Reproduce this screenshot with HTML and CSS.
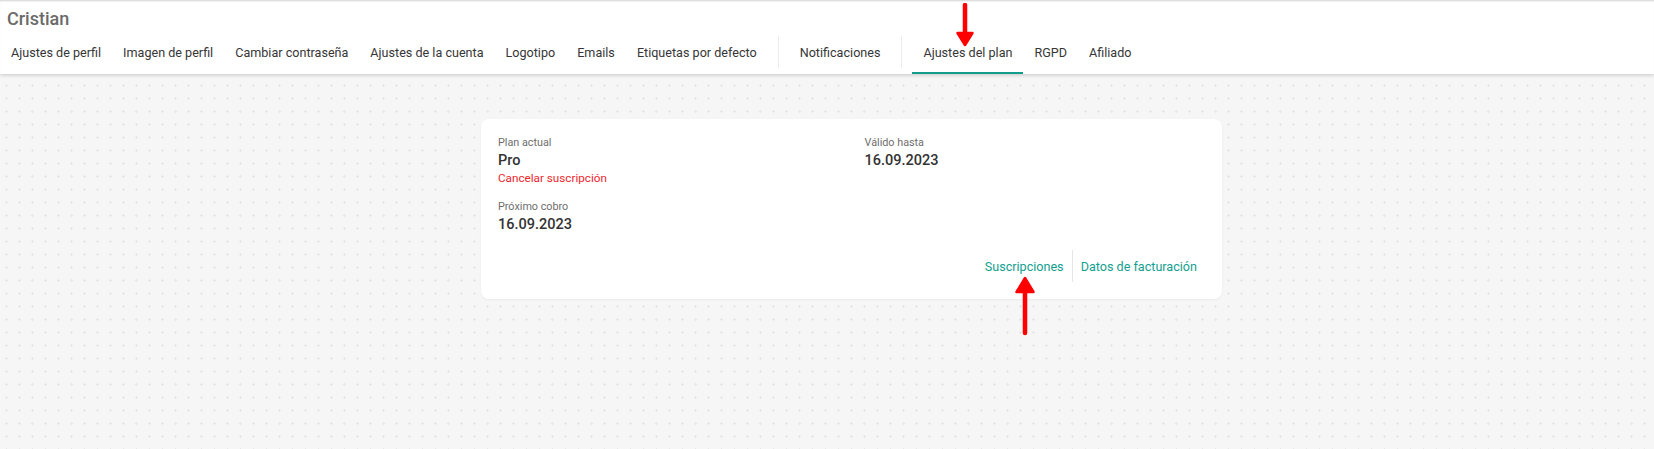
FILE: index.html
```html
<!DOCTYPE html>
<html lang="es">
<head>
<meta charset="utf-8">
<title>Ajustes del plan</title>
<link rel="stylesheet" href="styles.css">
</head>
<body>
<header class="topbar">
  <div class="user-name">Cristian</div>
  <nav class="tabs">
    <a class="tab">Ajustes de perfil</a>
    <a class="tab">Imagen de perfil</a>
    <a class="tab">Cambiar contraseña</a>
    <a class="tab">Ajustes de la cuenta</a>
    <a class="tab">Logotipo</a>
    <a class="tab">Emails</a>
    <a class="tab">Etiquetas por defecto</a>
    <span class="tab-sep"></span>
    <a class="tab">Notificaciones</a>
    <span class="tab-sep"></span>
    <a class="tab active">Ajustes del plan</a>
    <a class="tab">RGPD</a>
    <a class="tab">Afiliado</a>
  </nav>
</header>
<main class="content">
  <section class="plan-card">
    <div class="plan-grid">
      <div class="plan-col">
        <div class="label">Plan actual</div>
        <div class="value">Pro</div>
        <a class="cancel">Cancelar suscripción</a>
        <div class="label label-gap">Próximo cobro</div>
        <div class="value">16.09.2023</div>
      </div>
      <div class="plan-col">
        <div class="label">Válido hasta</div>
        <div class="value">16.09.2023</div>
      </div>
    </div>
    <div class="plan-links">
      <a class="plan-link">Suscripciones</a>
      <span class="link-sep"></span>
      <a class="plan-link">Datos de facturación</a>
    </div>
  </section>
</main>
<svg class="arrow arrow-down" width="20" height="44" viewBox="0 0 20 44"><path d="M10 2 V32" stroke="#f00" stroke-width="4.5" stroke-linecap="round"/><path d="M2.5 30 L10 42 L17.5 30 Z" fill="#f00" stroke="#f00" stroke-width="2.5" stroke-linejoin="round"/></svg>
<svg class="arrow arrow-up" width="22" height="60" viewBox="0 0 22 60"><path d="M11 16 V57" stroke="#f00" stroke-width="4.5" stroke-linecap="round"/><path d="M2.5 16 L11 2 L19.5 16 Z" fill="#f00" stroke="#f00" stroke-width="2.5" stroke-linejoin="round"/></svg>
</body>
</html>
```
FILE: styles.css
```css
html, body {
  margin: 0;
  padding: 0;
}
body {
  width: 1654px;
  height: 449px;
  overflow: hidden;
  position: relative;
  font-family: Roboto, "Liberation Sans", Arial, sans-serif;
  background-color: #f6f6f6;
  background-image: radial-gradient(circle, #e7e7e7 1px, rgba(231,231,231,0) 1.4px);
  background-size: 13px 13px;
  background-position: 0 1px;
}
a { text-decoration: none; cursor: pointer; }

.topbar {
  background: #fff;
  height: 74px;
  box-sizing: border-box;
  padding-top: 8px;
  box-shadow: inset 0 2px 2px -1px rgba(0,0,0,0.18), 0 1px 4px rgba(0,0,0,0.2);
  position: relative;
}
.user-name {
  font-size: 18px;
  line-height: 22px;
  font-weight: 500;
  color: #6a6a6a;
  padding-left: 7px;
}
.tabs {
  display: flex;
  align-items: center;
  height: 44px;
}
.tab {
  font-size: 12.6px;
  line-height: 16px;
  color: #363636;
  padding: 15px 11px 11px;
  border-bottom: 2px solid transparent;
  white-space: nowrap;
}
.tab.active {
  border-bottom-color: #129c8c;
}
.tab-sep {
  width: 1px;
  height: 32px;
  background: #ececec;
  margin: 0 10px;
}

.content {
  padding: 45px 0 0 49px;
}
.plan-card {
  width: 741px;
  height: 180px;
  box-sizing: border-box;
  margin: 0 auto;
  background: #fff;
  border-radius: 8px;
  box-shadow: 0 1px 3px rgba(0,0,0,0.05);
  padding: 16px 17px 17px 17px;
  display: flex;
  flex-direction: column;
}
.plan-grid {
  display: grid;
  grid-template-columns: 1fr 1fr;
  column-gap: 26px;
  flex: 1;
}
.plan-col {
  display: flex;
  flex-direction: column;
  align-items: flex-start;
}
.label {
  font-size: 10.8px;
  line-height: 16px;
  color: #6e6e6e;
}
.label-gap { margin-top: 13px; }
.value {
  font-size: 14.5px;
  line-height: 20px;
  font-weight: 500;
  color: #333;
}
.cancel {
  font-size: 11.7px;
  line-height: 15px;
  color: #f0262b;
}
.plan-links {
  display: flex;
  justify-content: flex-end;
  align-items: center;
  height: 32px;
}
.plan-link {
  font-size: 12.6px;
  color: #12a090;
  padding: 0 8px;
}
.link-sep {
  width: 1px;
  height: 32px;
  background: #e6e6e6;
}

.arrow {
  position: absolute;
}
.arrow-down {
  left: 955px;
  top: 3px;
}
.arrow-up {
  left: 1014px;
  top: 276px;
}
```
